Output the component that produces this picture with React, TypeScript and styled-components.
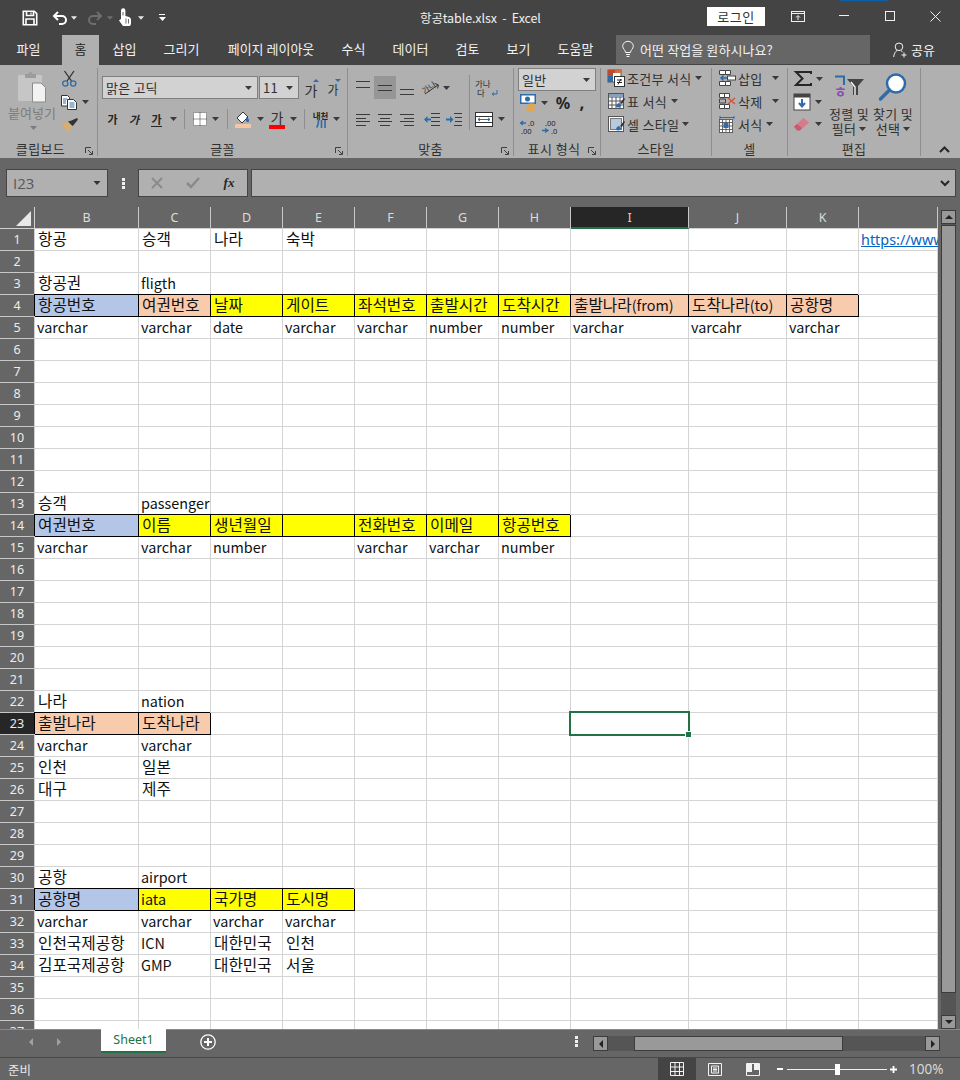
import React from "react";
import styled, { createGlobalStyle } from "styled-components";

const UI = `"Noto Sans CJK KR", "Noto Sans", sans-serif`;

const Global = createGlobalStyle`
  html, body { margin: 0; padding: 0; background: #666666; }
  body { font-family: ${UI}; }
  svg { display: block; overflow: visible; }
`;

const Page = styled.div`
  width: 960px; height: 1080px; overflow: hidden; background: #666666;
  display: flex; flex-direction: column; position: relative;
`;

/* ---------- title bar ---------- */
const TitleBar = styled.header`
  height: 35px; background: #444444; display: flex; align-items: center; flex: none; position: relative;
`;
const TitleStrip = styled.span`
  position: absolute; left: 840px; top: 0; width: 48px; height: 1px; background: #0a5fa8;
`;
const Qat = styled.div`
  display: flex; align-items: center; width: 420px; flex: none; padding-left: 18px; box-sizing: border-box; height: 100%;
`;
const DocTitle = styled.div`
  width: 287px; flex: none; color: #f0f0f0; font-size: 12.5px; white-space: pre; line-height: 35px; letter-spacing: -0.1px;
`;
const LoginButton = styled.button`
  width: 58px; height: 19px; flex: none; margin-top: -3px; padding: 0; border: 0; background: #ffffff; color: #333333;
  font: 13px/19px ${UI}; letter-spacing: .5px;
`;
const WindowButtons = styled.div`
  display: flex; height: 100%; align-items: center; margin-top: -3px;
`;

/* ---------- tabs ---------- */
const TabBar = styled.nav`
  height: 30px; flex: none; background: #444444; display: flex; box-sizing: border-box; position: relative;
`;
const Tab = styled.span<{ $active?: boolean; $w: number; $pr?: number }>`
  width: ${p => p.$w}px; flex: none; box-sizing: border-box; padding-right: ${p => p.$pr ?? 0}px; text-align: center;
  height: 30px; line-height: 28px; font-size: 13px; white-space: nowrap;
  color: ${p => (p.$active ? "#262626" : "#f2f2f2")};
  background: ${p => (p.$active ? "#b0b0b0" : "transparent")};
`;
const TellMe = styled.div`
  width: 254px; height: 29px; margin-left: 10px; flex: none; background: #666666; color: #f0f0f0; display: flex; align-items: center;
  font-size: 13px; padding-left: 6px; box-sizing: border-box; gap: 6px; letter-spacing: .1px;
`;
const Share = styled.div`
  margin-left: 23px; display: flex; align-items: center; gap: 3px; color: #f2f2f2; font-size: 13px; height: 29px;
`;

/* ---------- ribbon ---------- */
const Ribbon = styled.section`
  height: 93px; flex: none; background: #b0b0b0; display: flex; padding-top: 3px; box-sizing: border-box; position: relative;
`;
const Group = styled.div<{ $w: number }>`
  width: ${p => p.$w}px; height: 88px; flex: none; box-sizing: border-box; border-right: 1px solid #8e8e8e;
  display: flex; flex-direction: column; position: relative;
`;
const GroupBody = styled.div`
  height: 74px; flex: none; display: flex; position: relative;
`;
const GroupLabel = styled.div<{ $shift?: number }>`
  height: 14px; line-height: 14px; font-size: 13px; color: #303030; text-align: center; letter-spacing: .4px;
  padding-right: ${p => p.$shift ?? 0}px;
`;
const Launcher = styled.span`
  position: absolute; right: 4px; bottom: 1px;
`;
const Col = styled.div<{ $w?: number; $pad?: number; $top?: number }>`
  display: flex; flex-direction: column;
  ${p => (p.$w ? `width:${p.$w}px; flex:none;` : "")}
  padding-left: ${p => p.$pad ?? 0}px; padding-top: ${p => p.$top ?? 0}px;
  box-sizing: border-box;
`;
const Row = styled.div<{ $h: number; $mb?: number; $pad?: number }>`
  display: flex; align-items: center; height: ${p => p.$h}px; flex: none;
  margin-bottom: ${p => p.$mb ?? 0}px; padding-left: ${p => p.$pad ?? 0}px;
`;
const Slot = styled.span<{ $w: number; $on?: boolean; $ml?: number }>`
  display: inline-flex; align-items: center; justify-content: center; flex: none; height: 100%;
  width: ${p => p.$w}px; margin-left: ${p => p.$ml ?? 0}px;
  background: ${p => (p.$on ? "#969696" : "transparent")};
`;
const Thin = styled.span`
  display: block; width: 1px; height: 20px; background: #8e8e8e;
`;
const GroupInnerRule = styled.span`
  display: block; width: 1px; height: 55px; margin-top: 7px; background: #8e8e8e; flex: none;
`;
const PasteLabel = styled.span`
  font-size: 13px; color: #7c7c7c; white-space: nowrap; line-height: 16px;
`;
const Combo = styled.div<{ $w: number; $ml?: number }>`
  width: ${p => p.$w}px; height: 23px; margin-left: ${p => p.$ml ?? 0}px; flex: none; box-sizing: border-box;
  background: #d2d2d2; border: 1px solid #7f7f7f;
  display: flex; align-items: center; justify-content: space-between; padding: 0 5px 0 3px;
  font-size: 13px; color: #303030; line-height: 20px; letter-spacing: .2px;
`;
const FaceGlyph = styled.span<{ $b?: boolean; $i?: boolean; $u?: boolean; $size?: number }>`
  font-size: ${p => p.$size ?? 11}px; line-height: 14px; color: #262626;
  font-weight: ${p => (p.$b ? 700 : 400)};
  font-style: ${p => (p.$i ? "italic" : "normal")};
  border-bottom: ${p => (p.$u ? "1px solid #262626" : "0")};
`;
const GrowBox = styled.span`
  display: inline-flex; align-items: flex-start;
`;
const GrowGlyph = styled.span<{ $size: number }>`
  font-size: ${p => p.$size}px; line-height: 14px; color: #2e2e2e; margin-top: 5px;
`;
const GrowTri = styled.span`
  margin-left: -4px; margin-top: 1px;
`;
const ColorStack = styled.span`
  display: flex; flex-direction: column; align-items: center; width: 16px;
`;
const ColorGlyph = styled.span`
  font-size: 14px; line-height: 15px; color: #303030;
`;
const ColorBar = styled.span<{ $c: string }>`
  display: block; width: 16px; height: 4px; background: ${p => p.$c};
`;
const PhoneticStack = styled.span`
  display: flex; flex-direction: column; align-items: center; width: 16px;
`;
const PhoneticText = styled.span`
  font-size: 8.5px; line-height: 10px; font-weight: 700; color: #262626; white-space: nowrap;
`;
const WrapText = styled.span`
  font-size: 8.5px; line-height: 9px; color: #303030; white-space: pre;
`;
const WrapBox = styled.span`
  display: flex; align-items: flex-end; gap: 0;
`;
const ListRow = styled.div<{ $pad: number }>`
  height: 23px; display: flex; align-items: center; padding-left: ${p => p.$pad}px; padding-bottom: 3px; box-sizing: border-box;
  font-size: 13px; color: #303030; white-space: nowrap; letter-spacing: .3px;
`;
const ListIcon = styled.span`
  width: 16px; margin-right: 3px; flex: none; display: flex; justify-content: center;
`;
const ListCaret = styled.span<{ $ml: number }>`
  margin-left: ${p => p.$ml}px; display: inline-flex;
`;
const BigCol = styled.div<{ $w: number }>`
  width: ${p => p.$w}px; flex: none; display: flex; flex-direction: column; align-items: center;
  font-size: 13px; color: #303030; line-height: 15px; text-align: center; white-space: nowrap; letter-spacing: .3px;
`;
const BigIcon = styled.div<{ $h: number; $mb: number }>`
  height: ${p => p.$h}px; margin-bottom: ${p => p.$mb}px; flex: none; display: flex; align-items: flex-end; justify-content: center;
`;
const CaretLine = styled.span`
  display: inline-flex; align-items: center; gap: 3px;
`;
const Collapse = styled.span`
  position: absolute; left: 939px; top: 81px;
`;

/* ---------- formula bar ---------- */
const FormulaBar = styled.div`
  height: 28px; margin: 11px 5px 10px 6px; display: flex; flex: none; align-items: stretch;
`;
const FieldBox = styled.div<{ $w?: number; $ml?: number }>`
  ${p => (p.$w ? `width:${p.$w}px; flex:none;` : "flex:1;")}
  margin-left: ${p => p.$ml ?? 0}px; background: #b0b0b0; border: 1px solid #444444; box-sizing: border-box;
  display: flex; align-items: center; position: relative;
`;
const NameText = styled.span`
  font: 15px "Open Sans", sans-serif; color: #585858; padding-left: 6px; flex: 1;
`;
const Dots = styled.span`
  width: 30px; flex: none; display: flex; align-items: center; justify-content: center;
`;
const FxText = styled.span`
  font: italic 700 13px "Liberation Serif", serif; color: #262626; width: 36px; text-align: center;
`;

/* ---------- sheet ---------- */
const SheetRow = styled.div`
  height: 822px; flex: none; display: flex;
`;
const Viewport = styled.div`
  width: 938px; flex: none; overflow: hidden; height: 822px; position: relative;
`;
const Grid = styled.div`
  display: grid;
  grid-template-columns: 35px 104px repeat(6, 72px) 118px 98px 72px 79px;
  grid-auto-rows: 22px;
  background: #ffffff;
`;
const Corner = styled.div`
  background: #666666; box-sizing: border-box; border-right: 1px solid #d0d0d0; border-bottom: 1px solid #d0d0d0;
  display: flex; align-items: flex-end; justify-content: flex-end; padding: 0 3px 2px 0;
`;
const ColHead = styled.div<{ $active?: boolean }>`
  background: ${p => (p.$active ? "#262626" : "#666666")};
  color: ${p => (p.$active ? "#f0c8a0" : "#dcdcdc")};
  box-sizing: border-box; font: 12.5px/21px "Noto Sans", sans-serif; text-align: center;
  border-right: 1px solid #c8c8c8;
  border-bottom: ${p => (p.$active ? "2px solid #217346" : "1px solid #d0d0d0")};
`;
const RowHead = styled.div<{ $active?: boolean }>`
  background: ${p => (p.$active ? "#262626" : "#666666")}; color: #ececec;
  box-sizing: border-box; font: 12.5px/22px "Noto Sans", sans-serif; text-align: center;
  border-right: 1px solid #d0d0d0; border-bottom: 1px solid #c8c8c8;
`;
const Cell = styled.div<{ $fill?: string; $selected?: boolean }>`
  box-sizing: border-box; position: relative; padding-left: 2px; white-space: nowrap;
  font: 14.4px/20px "Noto Sans CJK KR", sans-serif; color: #111111;
  background: ${p => p.$fill ?? "transparent"};
  border-right: 1px solid ${p => (p.$fill ? "#000000" : "#d4d4d4")};
  border-bottom: 1px solid ${p => (p.$fill ? "#000000" : "#d4d4d4")};
  ${p => (p.$fill ? "box-shadow: -1px -1px 0 #000000;" : "")}
  ${p => (p.$selected ? `
    &::after { content: ""; position: absolute; left: -2px; top: -2px; width: 121px; height: 25px;
      box-sizing: border-box; border: 2px solid #217346; z-index: 2; }
    &::before { content: ""; position: absolute; left: 115px; top: 19px; width: 5px; height: 5px;
      background: #217346; outline: 1px solid #ffffff; z-index: 3; }
  ` : "")}
`;
const Hangul = styled.span`
  font-size: 15.7px; margin-left: 1px;
`;
const LinkText = styled.span`
  color: #0563c1; text-decoration: underline; font-size: 14.4px; font-family: "Noto Sans", sans-serif;
`;

/* ---------- vertical scrollbar ---------- */
const VBar = styled.div`
  width: 22px; height: 822px; flex: none; padding: 3px 0 0 3px; box-sizing: border-box;
  display: flex; flex-direction: column;
`;
const ScrollBtn = styled.div<{ $w?: number; $h?: number }>`
  width: ${p => p.$w ?? 15}px; height: ${p => p.$h ?? 14}px; flex: none; box-sizing: border-box;
  background: #999999; border: 1px solid #3c3c3c; display: flex; align-items: center; justify-content: center;
`;
const VTrack = styled.div`
  flex: 1; width: 15px; background: #555555; padding: 1px 0; box-sizing: border-box;
`;
const VThumb = styled.div`
  height: 768px; background: #999999; border: 1px solid #3c3c3c; box-sizing: border-box;
`;

/* ---------- sheet tabs ---------- */
const TabsRow = styled.div`
  height: 24px; flex: none; display: flex; align-items: flex-start; border-top: 1px solid #8a8a8a; box-sizing: border-box;
`;
const NavArrows = styled.div`
  width: 101px; height: 23px; flex: none; display: flex; padding-left: 29px; gap: 24px; align-items: center; box-sizing: border-box;
`;
const SheetTab = styled.div`
  width: 65px; height: 24px; margin-top: -1px; flex: none; background: #ffffff; color: #217346;
  box-sizing: border-box; border-bottom: 2px solid #217346; text-align: center;
  font: 12.5px/22px "Noto Sans", sans-serif;
`;
const AddSheet = styled.div`
  width: 84px; height: 23px; padding-left: 34px; box-sizing: border-box; flex: none; display: flex; align-items: center;
`;
const TabDots = styled.div`
  width: 17px; height: 23px; flex: none; margin-left: 325px; display: flex; align-items: center; box-sizing: border-box;
`;
const HBar = styled.div`
  display: flex; margin-top: 6px; margin-left: 1px; height: 15px; width: 347px; flex: none;
`;
const HTrack = styled.div`
  flex: 1; background: #555555; padding: 0 0 0 26px; box-sizing: border-box; height: 15px;
`;
const HThumb = styled.div`
  width: 209px; height: 15px; background: #999999; border: 1px solid #3c3c3c; box-sizing: border-box;
`;

/* ---------- status ---------- */
const StatusBar = styled.footer`
  margin-top: 4px; height: 23px; flex: none; display: flex; align-items: center; border-top: 1px solid #484848;
  box-sizing: border-box; color: #e8e8e8; font-size: 12.5px;
`;
const BottomEdge = styled.div`
  height: 2px; background: #3a3a3a; flex: none;
`;
const StatusText = styled.span`
  width: 658px; padding-left: 8px; box-sizing: border-box; flex: none;
`;
const ViewBtn = styled.span<{ $on?: boolean }>`
  width: 38px; height: 22px; flex: none; display: flex; align-items: center; justify-content: center;
  background: ${p => (p.$on ? "#444444" : "transparent")};
`;
const ZoomBox = styled.div`
  margin-left: 5px; display: flex; align-items: center; height: 22px;
`;
const Slider = styled.div`
  width: 100px; height: 1px; background: #f0f0f0; margin: 0 3px 0 4px; position: relative;
`;
const Knob = styled.span`
  position: absolute; left: 48px; top: -5px; width: 5px; height: 11px; background: #ffffff;
`;
const Percent = styled.span`
  margin-left: 12px; font: 13.5px "Noto Sans", sans-serif; color: #d8d8d8;
`;

/* ---------- icons ---------- */
const Caret = ({ c = "#3a3a3a", w = 7 }: { c?: string; w?: number }) => (
  <svg width={w} height={4} viewBox="0 0 7 4"><path d="M0 0h7L3.500 4z" fill={c} /></svg>
);
const Launch = () => (
  <svg width="8" height="8" viewBox="0 0 8 8" fill="none" stroke="#404040">
    <path d="M.5 6V.5H6" /><path d="M3 3l4 4M7.500 4v3.500H4" />
  </svg>
);
const SaveIcon = () => (
  <svg width="16" height="16" viewBox="0 0 16 16" fill="none" stroke="#fff" strokeWidth="1.600">
    <path d="M1.300 1.300h11l2.400 2.400v11H1.300z" /><path d="M4.500 1.500v4h7v-4M4 14.500V9h8v5.500" />
    <path d="M9 2.500v2" strokeWidth="1.200" />
  </svg>
);
const UndoIcon = ({ c = "#fff", flip = false }: { c?: string; flip?: boolean }) => (
  <svg width="16" height="14" viewBox="0 0 16 14" fill="none" stroke={c} strokeWidth="2" style={flip ? { transform: "scaleX(-1)" } : undefined}>
    <path d="M6 1L2 5l4 4" /><path d="M2 5h8a3.600 3.600 0 0 1 0 8H7" />
  </svg>
);
const TouchIcon = () => (
  <svg width="14" height="17" viewBox="0 0 14 17">
    <path d="M3 1.500a2.200 2.200 0 0 1 4.400 0V7l3 .8c1.400.4 2.600 1.400 2.600 3V15l-1 2H5L1 11.500 2.600 10 3 10.500z" fill="#fff" />
    <path d="M5 6.500V3M8 9.500v5M10.500 10v4.500" stroke="#444" strokeWidth=".8" />
  </svg>
);
const CustomizeIcon = () => (
  <svg width="7" height="7" viewBox="0 0 7 7"><path d="M0 .5h6" stroke="#fff" /><path d="M0 3h7L3.500 7z" fill="#fff" /></svg>
);
const RibbonDisplayIcon = () => (
  <svg width="14" height="11" viewBox="0 0 14 11" fill="none" stroke="#f0f0f0">
    <rect x=".5" y=".5" width="13" height="10" /><path d="M1 2.500h12" /><path d="M7 9V5" /><path d="M5 6.500L7 4.500 9 6.500" />
  </svg>
);
const MinIcon = () => <svg width="10" height="2"><path d="M0 .5h10" stroke="#f0f0f0" /></svg>;
const MaxIcon = () => <svg width="10" height="10"><rect x=".5" y=".5" width="9" height="9" fill="none" stroke="#f0f0f0" /></svg>;
const CloseIcon = () => <svg width="11" height="11"><path d="M.5.5l10 10M10.500.5l-10 10" stroke="#f0f0f0" /></svg>;
const BulbIcon = () => (
  <svg width="12" height="17" viewBox="0 0 12 17" fill="none" stroke="#f4f4f4">
    <path d="M3.500 11.500C3.500 9 .7 8 .7 5.300A5.300 5 0 0 1 11.300 5.300C11.300 8 8.500 9 8.500 11.500z" /><path d="M4 13.500h4M4.600 15.500h2.800" />
  </svg>
);
const ShareIcon = () => (
  <svg width="15" height="16" viewBox="0 0 15 16" fill="none" stroke="#f4f4f4">
    <circle cx="6" cy="4.800" r="3.800" /><path d="M.7 15c.3-3.600 2-5.600 3.300-6.600M8 8.600c.6.4 1.200 1 1.600 1.600" /><path d="M11 10.500v5M8.500 13h5" />
  </svg>
);
const PasteIcon = () => (
  <svg width="29" height="32" viewBox="0 0 29 32">
    <rect x="0" y="4" width="24" height="26" rx="1" fill="#c6c6c6" />
    <path d="M7 3h3.500a2 2 0 0 1 4 0H18v4H7z" fill="#9c9c9c" />
    <path d="M14.500 12H23l4.500 4.500V31h-13z" fill="#f2f2f2" stroke="#8a8a8a" />
  </svg>
);
const ScissorsIcon = () => (
  <svg width="15" height="16" viewBox="0 0 15 16" fill="none">
    <path d="M2.500 0L9.500 10M12 0L5 10" stroke="#303030" strokeWidth="1.300" />
    <circle cx="3.300" cy="12.500" r="2.600" stroke="#2e6ba8" strokeWidth="1.300" />
    <circle cx="11.200" cy="12.500" r="2.600" stroke="#2e6ba8" strokeWidth="1.300" />
  </svg>
);
const CopyIcon = () => (
  <svg width="16" height="15" viewBox="0 0 16 15">
    <path d="M.5.500h6l2 2V11H.5z" fill="#fff" stroke="#333" />
    <path d="M6.500 4.500h6l3 3v7h-9z" fill="#fff" stroke="#333" />
    <path d="M2 4h4M2 6h3M2 8h3M8.500 8h5M8.500 10h5M8.500 12h5" stroke="#2e6ba8" />
  </svg>
);
const BrushIcon = () => (
  <svg width="16" height="14" viewBox="0 0 16 14">
    <path d="M0 6.500l5-2.500 5 5-4.500 5z" fill="#d9ae6a" />
    <path d="M6 3.500l3.500-1L15 0l1 1.500-4 5L10.500 8z" fill="#333" />
  </svg>
);
const BordersIcon = () => (
  <svg width="14" height="14" viewBox="0 0 14 14">
    <rect width="14" height="14" fill="#fff" />
    <path d="M.5.500h13v13H.5zM7 .5v13M.5 7h13" fill="none" stroke="#333" strokeDasharray="1 1" />
  </svg>
);
const FillIcon = () => (
  <svg width="17" height="17" viewBox="0 0 17 17">
    <path d="M2 7l6-6 5 5-6 6z" fill="#fff" stroke="#333" />
    <path d="M11 6c2 1 3.500 2 3 4s-2 1-3 0z" fill="#2e6ba8" />
    <rect x="0" y="13" width="16" height="4" fill="#f4c6a4" />
  </svg>
);
const PhoneticMark = () => (
  <svg width="10" height="8" viewBox="0 0 10 8">
    <path d="M2.500 0c0 3 0 5.500-2 7.500M5.500 0v8M9 0v8" stroke="#2e6ba8" strokeWidth="1.600" fill="none" />
  </svg>
);
const Lines = ({ ys, xs }: { ys: number[]; xs: [number, number][] }) => (
  <svg width="15" height="16" viewBox="0 0 15 16" stroke="#3a3a3a">
    {ys.map((y, i) => <path key={y} d={`M${xs[i][0]} ${y + 0.5}H${xs[i][1]}`} />)}
  </svg>
);
const full: [number, number] = [0, 14];
const Orient = () => (
  <svg width="18" height="15" viewBox="0 0 18 15" fill="none" stroke="#333">
    <text x="0" y="12" fontSize="8" fill="#333" stroke="none" transform="rotate(-35 5 9)" fontFamily="Noto Sans CJK KR">가나</text>
    <path d="M3 14L16 5M13 3.500L16.500 5 15.500 8.500" />
  </svg>
);
const Indent = ({ right = false }: { right?: boolean }) => (
  <svg width="16" height="13" viewBox="0 0 16 13">
    <path d={right ? "M8 .5h8M9 4.500h7M9 8.500h7M8 12.500h8" : "M7 .5h9M7 4.500h9M7 8.500h9M7 12.500h9"} stroke="#3a3a3a" />
    <path d={right ? "M0 5.500h4V3l3.500 3.500L4 10V7.500H0z" : "M7 5.500H3.500V3L0 6.500 3.500 10V7.500H7z"} fill="#2e6ba8" />
  </svg>
);
const WrapArrow = () => (
  <svg width="7" height="7" viewBox="0 0 7 7" fill="none" stroke="#2e6ba8"><path d="M6 0v4H1M3 2.500L1 4l2 1.500" /></svg>
);
const MergeIcon = () => (
  <svg width="18" height="15" viewBox="0 0 18 15">
    <rect x=".5" y=".5" width="17" height="14" fill="#fff" stroke="#333" />
    <path d="M.5 4.500h17M.5 10.500h17" stroke="#333" />
    <path d="M3 7.500h12M5 6l-2 1.500L5 9M13 6l2 1.500L13 9" fill="none" stroke="#2e6ba8" />
  </svg>
);
const CurrencyIcon = () => (
  <svg width="17" height="18" viewBox="0 0 17 18">
    <rect width="16" height="10" fill="#2e6ba8" />
    <rect x="1.500" y="1.500" width="13" height="7" fill="#fff" />
    <circle cx="7.500" cy="5" r="2.500" fill="#2e6ba8" />
    <ellipse cx="11.500" cy="11" rx="4.500" ry="1.700" fill="#e2a552" />
    <ellipse cx="11.500" cy="14" rx="4.500" ry="1.700" fill="#e2a552" />
    <ellipse cx="9.500" cy="16.300" rx="4.500" ry="1.700" fill="#e2a552" />
  </svg>
);
const PercentGlyph = styled.span`
  font: 700 16px "Noto Sans", sans-serif; color: #262626; line-height: 16px;
`;
const CommaGlyph = styled.span`
  font: 700 17px "Noto Sans", sans-serif; color: #262626; line-height: 14px;
`;
const Decimals = ({ more = false }: { more?: boolean }) => (
  <svg width="16" height="15" viewBox="0 0 16 15">
    <text x={more ? 3 : 8} y="6.500" fontSize="7.500" fill="#262626" fontFamily="Noto Sans">{more ? ".00" : ".0"}</text>
    <text x={more ? 9 : 1} y="14.500" fontSize="7.500" fill="#262626" fontFamily="Noto Sans">{more ? ".0" : ".00"}</text>
    <path d={more ? "M0 11.500h5M3 9.500l3 2-3 2" : "M1 4h5M3 2L0.500 4 3 6"} fill="none" stroke="#2e6ba8" strokeWidth="1.300" />
  </svg>
);
const GridBase = ({ n = 4 }: { n?: number }) => (
  <>
    <rect x=".5" y=".5" width="15" height="15" fill="#fff" stroke="#555" />
    {Array.from({ length: n - 1 }, (_, i) => (
      <path key={i} d={`M${(i + 1) * 16 / n} 0v16M0 ${(i + 1) * 16 / n}h16`} stroke="#555" />
    ))}
  </>
);
const CondIcon = () => (
  <svg width="17" height="17" viewBox="0 0 17 17">
    <rect width="13" height="12" fill="#fff" stroke="#555" />
    <rect x="0" y="0" width="7" height="3" fill="#bf4a2f" /><rect x="7" y="0" width="6" height="3" fill="#d86b3a" />
    <rect x="0" y="3" width="5" height="3" fill="#bf4a2f" /><rect x="0" y="6" width="5" height="3" fill="#2e6ba8" /><rect x="0" y="9" width="5" height="3" fill="#2e6ba8" />
    <rect x="6.500" y="6.500" width="10" height="10" fill="#fff" stroke="#333" />
    <path d="M9 10h5M9 12.500h5M10 14.500L13 9" stroke="#222" fill="none" />
  </svg>
);
const PaintOver = () => (
  <>
    <path d="M8 14c0-3 2-4 3-4l2 2c0 2-2 3-5 2z" fill="#2e6ba8" />
    <path d="M12 10l4-5 1 1-3 5z" fill="#333" />
  </>
);
const TableIcon = () => (
  <svg width="17" height="17" viewBox="0 0 17 17">
    <GridBase /><rect x="1" y="1" width="14" height="3" fill="#8a9fc0" /><PaintOver />
  </svg>
);
const CellStyleIcon = () => (
  <svg width="17" height="17" viewBox="0 0 17 17">
    <rect x=".5" y=".5" width="15" height="15" fill="#fff" stroke="#555" />
    <rect x="2.500" y="2.500" width="11" height="11" fill="#b9c9de" stroke="#777" /><PaintOver />
  </svg>
);
const InsertIcon = () => (
  <svg width="17" height="16" viewBox="0 0 17 16" fill="none">
    <path d="M.5.5h6v4h-6zM.5 11.500h6v4h-6zM6.500 11.500h5v4h-5zM6.500.5h5v4h-5z" stroke="#444" fill="#fff" />
    <rect x="8.500" y="6" width="8" height="4" fill="#fff" stroke="#444" />
    <path d="M8 8H2M4.500 5.500L2 8l2.500 2.500" stroke="#2e6ba8" strokeWidth="1.500" />
  </svg>
);
const DeleteIcon = () => (
  <svg width="17" height="16" viewBox="0 0 17 16" fill="none">
    <path d="M.5.5h5v4h-5zM5.500.5h5v4h-5zM.5 11.500h5v4h-5zM5.500 11.500h5v4h-5z" stroke="#444" fill="#fff" />
    <path d="M.5 6h6v4h-6z" stroke="#444" />
    <path d="M9 5l7 6M16 5l-7 6" stroke="#d0553a" strokeWidth="1.500" />
  </svg>
);
const FormatIcon = () => (
  <svg width="17" height="17" viewBox="0 0 17 17">
    <path d="M1 1.500h14M1 0v3M15 0v3" stroke="#2e6ba8" fill="none" />
    <g transform="translate(0 3) scale(.875)"><GridBase /></g>
    <rect x="4.500" y="7" width="5" height="5" fill="#2e6ba8" />
  </svg>
);
const SigmaIcon = () => (
  <svg width="18" height="15" viewBox="0 0 18 15"><path d="M17 3V1H2l6.500 6.500L2 14h15v-2" fill="none" stroke="#262626" strokeWidth="2" /></svg>
);
const FillDownIcon = () => (
  <svg width="16" height="16" viewBox="0 0 16 16">
    <rect width="16" height="16" fill="#fff" stroke="#444" /><rect width="16" height="3.500" fill="#444" />
    <path d="M8 5v7M5 9l3 3.500L11 9" fill="none" stroke="#2e6ba8" strokeWidth="2" />
  </svg>
);
const EraserIcon = () => (
  <svg width="16" height="14" viewBox="0 0 16 14">
    <path d="M0 9.500L9.500 1l5.500 4.500L6 13.500H3z" fill="#d9798c" />
    <path d="M0 9.500l3-2.500 5 4-2 2.500H3z" fill="#c55d70" />
  </svg>
);
const SortIcon = () => (
  <svg width="30" height="23" viewBox="0 0 30 23">
    <path d="M1 1.500h9V10" fill="none" stroke="#2e6ba8" strokeWidth="2" />
    <text x="0" y="22" fontSize="14" fontWeight="700" fill="#8c4bb0" fontFamily="Noto Sans CJK KR">ㅎ</text>
    <path d="M13 4h17l-6 7v9h-5v-9z" fill="#444" />
    <path d="M17 7l4 5v8" fill="none" stroke="#fff" strokeWidth="1.300" />
  </svg>
);
const FindIcon = () => (
  <svg width="28" height="28" viewBox="0 0 28 28">
    <circle cx="17" cy="10.500" r="9" fill="#fff" stroke="#2e6ba8" strokeWidth="2.500" />
    <path d="M10.500 17L1.500 26" stroke="#2e6ba8" strokeWidth="3.500" strokeLinecap="round" />
  </svg>
);
const VDots = () => (
  <svg width="3" height="11"><rect width="3" height="3" fill="#fff" opacity=".9" /><rect y="4" width="3" height="3" fill="#fff" opacity=".9" /><rect y="8" width="3" height="3" fill="#fff" opacity=".9" /></svg>
);
const Tri = ({ dir, c = "#222", s = 4 }: { dir: "u" | "d" | "l" | "r"; c?: string; s?: number }) => {
  const d = { u: "M0 4h8L4 0z", d: "M0 0h8L4 4z", l: "M4 0v8L0 4z", r: "M0 0v8l4-4z" }[dir];
  const wide = dir === "u" || dir === "d";
  return <svg width={wide ? s * 2 : s} height={wide ? s : s * 2} viewBox={wide ? "0 0 8 4" : "0 0 4 8"}><path d={d} fill={c} /></svg>;
};
const XIcon = () => <svg width="12" height="12" fill="none" stroke="#8a8a8a" strokeWidth="2"><path d="M1 1l10 10M11 1L1 11" /></svg>;
const CheckIcon = () => <svg width="14" height="12" fill="none" stroke="#8a8a8a" strokeWidth="2.500"><path d="M1 6l4 4 8-9" /></svg>;
const Chevron = () => <svg width="10" height="6" fill="none" stroke="#262626" strokeWidth="2"><path d="M1 1l4 4 4-4" /></svg>;
const ChevronUp = () => <svg width="11" height="7" fill="none" stroke="#262626" strokeWidth="2"><path d="M1 6l4.500-4.500L10 6" /></svg>;
const PlusCircle = () => (
  <svg width="16" height="16" fill="none" stroke="#fff"><circle cx="8" cy="8" r="7.200" strokeWidth="1.300" /><path d="M4 8h8M8 4v8" strokeWidth="2" /></svg>
);
const NormalView = () => (
  <svg width="14" height="14" fill="none" stroke="#f2f2f2"><path d="M.5.500h13v13H.5zM.5 5h13M.5 9.500h13M5 .5v13M9.500.5v13" /></svg>
);
const LayoutView = () => (
  <svg width="14" height="13" fill="none" stroke="#f2f2f2"><path d="M.5.500h13v12H.5z" /><path d="M3.500 3h7v7h-7zM5 5h4M5 6.500h4M5 8h4" /></svg>
);
const BreakView = () => (
  <svg width="14" height="13"><path d="M.5.500h13v12H.5z" fill="none" stroke="#f2f2f2" /><path d="M1 1h5v8H1zM8 1h5v6H8z" fill="#f2f2f2" /></svg>
);
const Minus = () => <svg width="6" height="2"><rect width="6" height="2" fill="#fff" /></svg>;
const Plus = () => <svg width="7" height="7"><path d="M0 3.500h7M3.500 0v7" stroke="#fff" strokeWidth="1.800" /></svg>;

/* ---------- data ---------- */
const BLUE = "#b4c6e7", PEACH = "#f8cbad", YELLOW = "#ffff00";
const COLS = ["B", "C", "D", "E", "F", "G", "H", "I", "J", "K", ""];
type C = [string, string?];
const y = (t: string): C => [t, YELLOW];
const b = (t: string): C => [t, BLUE];
const p = (t: string): C => [t, PEACH];
const t = (s: string): C => [s];
const DATA: Record<number, C[]> = {
  1: [t("항공"), t("승객"), t("나라"), t("숙박")],
  3: [t("항공권"), t("fligth")],
  4: [b("항공번호"), p("여권번호"), y("날짜"), y("게이트"), y("좌석번호"), y("출발시간"), y("도착시간"), p("출발나라(from)"), p("도착나라(to)"), p("공항명")],
  5: ["varchar", "varchar", "date", "varchar", "varchar", "number", "number", "varchar", "varcahr", "varchar"].map(t),
  13: [t("승객"), t("passenger")],
  14: [b("여권번호"), y("이름"), y("생년월일"), y(""), y("전화번호"), y("이메일"), y("항공번호")],
  15: ["varchar", "varchar", "number", "", "varchar", "varchar", "number"].map(t),
  22: [t("나라"), t("nation")],
  23: [p("출발나라"), p("도착나라")],
  24: [t("varchar"), t("varchar")],
  25: [t("인천"), t("일본")],
  26: [t("대구"), t("제주")],
  30: [t("공항"), t("airport")],
  31: [b("공항명"), y("iata"), y("국가명"), y("도시명")],
  32: ["varchar", "varchar", "varchar", "varchar"].map(t),
  33: [t("인천국제공항"), t("ICN"), t("대한민국"), t("인천")],
  34: [t("김포국제공항"), t("GMP"), t("대한민국"), t("서울")],
};

const Runs = ({ text }: { text: string }) => (
  <>
    {text.split(/([가-힣]+)/).filter(Boolean).map((r, i) =>
      /[가-힣]/.test(r) ? <Hangul key={i}>{r}</Hangul> : <React.Fragment key={i}>{r}</React.Fragment>
    )}
  </>
);

const SheetGrid = () => (
  <Grid>
    <Corner><svg width="15" height="15"><path d="M15 0v15H0z" fill="#e8e8e8" /></svg></Corner>
    {COLS.map((c, i) => <ColHead key={i} $active={c === "I"}>{c}</ColHead>)}
    {Array.from({ length: 37 }, (_, r) => r + 1).map(r => (
      <React.Fragment key={r}>
        <RowHead $active={r === 23}>{r}</RowHead>
        {COLS.map((c, i) => {
          const cell = DATA[r]?.[i];
          return (
            <Cell key={c + i} $fill={cell?.[1]} $selected={r === 23 && c === "I"}>
              {r === 1 && c === "" ? <LinkText>https://www.airport.kr</LinkText> : cell ? <Runs text={cell[0]} /> : null}
            </Cell>
          );
        })}
      </React.Fragment>
    ))}
  </Grid>
);

const AlignTopRow = () => (
  <Row $h={23} $mb={9} $pad={6}>
    <Slot $w={18}><Lines ys={[1, 7]} xs={[full, full]} /></Slot>
    <Slot $w={22} $ml={2} $on><Lines ys={[5, 10]} xs={[full, full]} /></Slot>
    <Slot $w={18} $ml={2}><Lines ys={[9, 14]} xs={[full, full]} /></Slot>
    <Slot $w={22} $ml={4}><Orient /></Slot>
    <Slot $w={8}><Caret /></Slot>
  </Row>
);
const AlignBottomRow = () => (
  <Row $h={22} $pad={6}>
    <Slot $w={18}><Lines ys={[3, 7, 10, 14]} xs={[full, [0, 10], full, [0, 10]]} /></Slot>
    <Slot $w={18} $ml={4}><Lines ys={[3, 7, 10, 14]} xs={[full, [2, 12], full, [2, 12]]} /></Slot>
    <Slot $w={18} $ml={4}><Lines ys={[3, 7, 10, 14]} xs={[full, [4, 14], full, [4, 14]]} /></Slot>
    <Slot $w={20} $ml={6}><Indent /></Slot>
    <Slot $w={20} $ml={2}><Indent right /></Slot>
  </Row>
);

export default function App() {
  return (
    <Page>
      <Global />
      <TitleBar>
        <TitleStrip />
        <Qat>
          <Slot $w={24}><SaveIcon /></Slot>
          <Slot $w={16} $ml={10}><UndoIcon /></Slot>
          <Slot $w={12}><Caret c="#e8e8e8" w={6} /></Slot>
          <Slot $w={16} $ml={7}><UndoIcon c="#6e6e6e" flip /></Slot>
          <Slot $w={14}><Caret c="#6e6e6e" w={6} /></Slot>
          <Slot $w={14} $ml={1}><TouchIcon /></Slot>
          <Slot $w={18}><Caret c="#e8e8e8" w={6} /></Slot>
          <Slot $w={24}><CustomizeIcon /></Slot>
        </Qat>
        <DocTitle>{"항공table.xlsx  -  Excel"}</DocTitle>
        <LoginButton>로그인</LoginButton>
        <WindowButtons>
          <Slot $w={46} $ml={10}><RibbonDisplayIcon /></Slot>
          <Slot $w={46}><MinIcon /></Slot>
          <Slot $w={46}><MaxIcon /></Slot>
          <Slot $w={45}><CloseIcon /></Slot>
        </WindowButtons>
      </TitleBar>
      <TabBar>
        <Tab $w={62} $pr={5}>파일</Tab>
        <Tab $w={37} $active>홈</Tab>
        <Tab $w={51}>삽입</Tab>
        <Tab $w={63}>그리기</Tab>
        <Tab $w={116}>페이지 레이아웃</Tab>
        <Tab $w={49}>수식</Tab>
        <Tab $w={65}>데이터</Tab>
        <Tab $w={49}>검토</Tab>
        <Tab $w={53}>보기</Tab>
        <Tab $w={61}>도움말</Tab>
        <TellMe><BulbIcon />어떤 작업을 원하시나요?</TellMe>
        <Share><ShareIcon />공유</Share>
      </TabBar>
      <Ribbon>
        <Group $w={98}>
          <GroupBody>
            <Col $w={58} $top={2}>
              <Row $h={33} $pad={18}><PasteIcon /></Row>
              <Row $h={20} $pad={8}><PasteLabel>붙여넣기</PasteLabel></Row>
              <Row $h={10} $pad={30}><Caret c="#7c7c7c" /></Row>
            </Col>
            <Col $top={2}>
              <Row $h={18} $pad={4}><ScissorsIcon /></Row>
              <Row $h={28} $pad={3}><CopyIcon /><Slot $w={16}><Caret /></Slot></Row>
              <Row $h={18} $pad={4}><BrushIcon /></Row>
            </Col>
          </GroupBody>
          <GroupLabel $shift={16}>클립보드</GroupLabel>
          <Launcher><Launch /></Launcher>
        </Group>

        <Group $w={250}>
          <GroupBody>
            <Col $w={249} $top={8}>
              <Row $h={23} $mb={9} $pad={4}>
                <Combo $w={156}><span>맑은 고딕</span><Caret /></Combo>
                <Combo $w={40} $ml={1}><span>11</span><Caret /></Combo>
                <Slot $w={22} $ml={2}>
                  <GrowBox><GrowGlyph $size={14}>가</GrowGlyph><GrowTri><Tri dir="u" c="#2e6ba8" s={3} /></GrowTri></GrowBox>
                </Slot>
                <Slot $w={22}>
                  <GrowBox><GrowGlyph $size={12}>가</GrowGlyph><GrowTri><Tri dir="d" c="#2e6ba8" s={3} /></GrowTri></GrowBox>
                </Slot>
              </Row>
              <Row $h={22} $pad={4}>
                <Slot $w={21}><FaceGlyph $b>가</FaceGlyph></Slot>
                <Slot $w={22}><FaceGlyph $b $i>가</FaceGlyph></Slot>
                <Slot $w={23}><FaceGlyph $b $u>가</FaceGlyph></Slot>
                <Slot $w={10}><Caret /></Slot>
                <Slot $w={12}><Thin /></Slot>
                <Slot $w={19}><BordersIcon /></Slot>
                <Slot $w={13}><Caret /></Slot>
                <Slot $w={10}><Thin /></Slot>
                <Slot $w={22}><FillIcon /></Slot>
                <Slot $w={12}><Caret /></Slot>
                <Slot $w={22}><ColorStack><ColorGlyph>가</ColorGlyph><ColorBar $c="#ff0000" /></ColorStack></Slot>
                <Slot $w={10}><Caret /></Slot>
                <Slot $w={12}><Thin /></Slot>
                <Slot $w={21}><PhoneticStack><PhoneticText>내천</PhoneticText><PhoneticMark /></PhoneticStack></Slot>
                <Slot $w={10}><Caret /></Slot>
              </Row>
            </Col>
          </GroupBody>
          <GroupLabel>글꼴</GroupLabel>
          <Launcher><Launch /></Launcher>
        </Group>

        <Group $w={166}>
          <GroupBody>
            <Col $w={121} $top={8}>
              <AlignTopRow />
              <AlignBottomRow />
            </Col>
            <GroupInnerRule />
            <Col $top={8} $pad={5}>
              <Row $h={23} $mb={9}><WrapBox><WrapText>{"가나\n 다"}</WrapText><WrapArrow /></WrapBox></Row>
              <Row $h={22}><MergeIcon /><Slot $w={17}><Caret /></Slot></Row>
            </Col>
          </GroupBody>
          <GroupLabel>맞춤</GroupLabel>
          <Launcher><Launch /></Launcher>
        </Group>

        <Group $w={87}>
          <GroupBody>
            <Col $w={86}>
              <Row $h={23} $mb={2} $pad={4}><Combo $w={78}><span>일반</span><Caret /></Combo></Row>
              <Row $h={20} $mb={5} $pad={6}>
                <CurrencyIcon />
                <Slot $w={14}><Caret /></Slot>
                <Slot $w={24}><PercentGlyph>%</PercentGlyph></Slot>
                <Slot $w={14}><CommaGlyph>,</CommaGlyph></Slot>
              </Row>
              <Row $h={16} $pad={6}>
                <Decimals />
                <Slot $w={6} />
                <Decimals more />
              </Row>
            </Col>
          </GroupBody>
          <GroupLabel $shift={6}>표시 형식</GroupLabel>
          <Launcher><Launch /></Launcher>
        </Group>

        <Group $w={111}>
          <GroupBody>
            <Col>
              <ListRow $pad={7}><ListIcon><CondIcon /></ListIcon>조건부 서식<ListCaret $ml={3}><Caret /></ListCaret></ListRow>
              <ListRow $pad={7}><ListIcon><TableIcon /></ListIcon>표 서식<ListCaret $ml={4}><Caret /></ListCaret></ListRow>
              <ListRow $pad={7}><ListIcon><CellStyleIcon /></ListIcon>셀 스타일<ListCaret $ml={3}><Caret /></ListCaret></ListRow>
            </Col>
          </GroupBody>
          <GroupLabel>스타일</GroupLabel>
        </Group>

        <Group $w={76}>
          <GroupBody>
            <Col>
              <ListRow $pad={7}><ListIcon><InsertIcon /></ListIcon>삽입<ListCaret $ml={9}><Caret /></ListCaret></ListRow>
              <ListRow $pad={7}><ListIcon><DeleteIcon /></ListIcon>삭제<ListCaret $ml={9}><Caret /></ListCaret></ListRow>
              <ListRow $pad={7}><ListIcon><FormatIcon /></ListIcon>서식<ListCaret $ml={3}><Caret /></ListCaret></ListRow>
            </Col>
          </GroupBody>
          <GroupLabel>셀</GroupLabel>
        </Group>

        <Group $w={133}>
          <GroupBody>
            <Col $w={39} $top={2} $pad={6}>
              <Row $h={17} $mb={7}><SigmaIcon /><Slot $w={14}><Caret /></Slot></Row>
              <Row $h={16} $mb={7}><FillDownIcon /><Slot $w={16}><Caret /></Slot></Row>
              <Row $h={14}><EraserIcon /><Slot $w={16}><Caret /></Slot></Row>
            </Col>
            <BigCol $w={44}>
              <BigIcon $h={30} $mb={8}><SortIcon /></BigIcon>
              <span>정렬 및</span>
              <CaretLine>필터<Caret /></CaretLine>
            </BigCol>
            <BigCol $w={44}>
              <BigIcon $h={33} $mb={5}><FindIcon /></BigIcon>
              <span>찾기 및</span>
              <CaretLine>선택<Caret /></CaretLine>
            </BigCol>
          </GroupBody>
          <GroupLabel>편집</GroupLabel>
        </Group>
        <Collapse><ChevronUp /></Collapse>
      </Ribbon>

      <FormulaBar>
        <FieldBox $w={102}><NameText>I23</NameText><Slot $w={20}><Caret w={8} c="#333" /></Slot></FieldBox>
        <Dots><VDots /></Dots>
        <FieldBox $w={110}>
          <Slot $w={36}><XIcon /></Slot>
          <Slot $w={36}><CheckIcon /></Slot>
          <FxText>fx</FxText>
        </FieldBox>
        <FieldBox $ml={3}>
          <Slot $w={683} />
          <Slot $w={20}><Chevron /></Slot>
        </FieldBox>
      </FormulaBar>

      <SheetRow>
        <Viewport><SheetGrid /></Viewport>
        <VBar>
          <ScrollBtn><Tri dir="u" /></ScrollBtn>
          <VTrack><VThumb /></VTrack>
          <ScrollBtn><Tri dir="d" /></ScrollBtn>
        </VBar>
      </SheetRow>

      <TabsRow>
        <NavArrows><Tri dir="l" c="#a0a0a0" /><Tri dir="r" c="#a0a0a0" /></NavArrows>
        <SheetTab>Sheet1</SheetTab>
        <AddSheet><PlusCircle /></AddSheet>
        <TabDots><VDots /></TabDots>
        <HBar>
          <ScrollBtn $w={15} $h={15}><Tri dir="l" /></ScrollBtn>
          <HTrack><HThumb /></HTrack>
          <ScrollBtn $w={15} $h={15}><Tri dir="r" /></ScrollBtn>
        </HBar>
      </TabsRow>

      <StatusBar>
        <StatusText>준비</StatusText>
        <ViewBtn $on><NormalView /></ViewBtn>
        <ViewBtn><LayoutView /></ViewBtn>
        <ViewBtn><BreakView /></ViewBtn>
        <ZoomBox>
          <Minus />
          <Slider><Knob /></Slider>
          <Plus />
          <Percent>100%</Percent>
        </ZoomBox>
      </StatusBar>
      <BottomEdge />
    </Page>
  );
}
